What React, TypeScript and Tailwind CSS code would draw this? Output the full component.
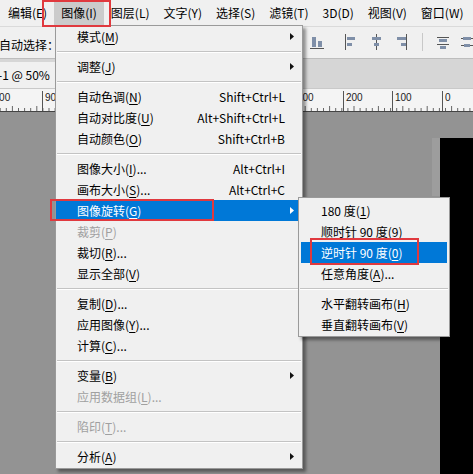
import type { ReactNode } from "react";

type Item =
  | { kind: "sep" }
  | {
      kind: "item";
      label: string;
      key: string;
      tail?: string;
      shortcut?: string;
      submenu?: boolean;
      disabled?: boolean;
      active?: boolean;
    };

const menuBar = ["编辑(E)", "图像(I)", "图层(L)", "文字(Y)", "选择(S)", "滤镜(T)", "3D(D)", "视图(V)", "窗口(W)"];

const imageMenu: Item[] = [
  { kind: "item", label: "模式", key: "M", submenu: true },
  { kind: "sep" },
  { kind: "item", label: "调整", key: "J", submenu: true },
  { kind: "sep" },
  { kind: "item", label: "自动色调", key: "N", shortcut: "Shift+Ctrl+L" },
  { kind: "item", label: "自动对比度", key: "U", shortcut: "Alt+Shift+Ctrl+L" },
  { kind: "item", label: "自动颜色", key: "O", shortcut: "Shift+Ctrl+B" },
  { kind: "sep" },
  { kind: "item", label: "图像大小", key: "I", tail: "...", shortcut: "Alt+Ctrl+I" },
  { kind: "item", label: "画布大小", key: "S", tail: "...", shortcut: "Alt+Ctrl+C" },
  { kind: "item", label: "图像旋转", key: "G", submenu: true, active: true },
  { kind: "item", label: "裁剪", key: "P", disabled: true },
  { kind: "item", label: "裁切", key: "R", tail: "..." },
  { kind: "item", label: "显示全部", key: "V" },
  { kind: "sep" },
  { kind: "item", label: "复制", key: "D", tail: "..." },
  { kind: "item", label: "应用图像", key: "Y", tail: "..." },
  { kind: "item", label: "计算", key: "C", tail: "..." },
  { kind: "sep" },
  { kind: "item", label: "变量", key: "B", submenu: true },
  { kind: "item", label: "应用数据组", key: "L", tail: "...", disabled: true },
  { kind: "sep" },
  { kind: "item", label: "陷印", key: "T", tail: "...", disabled: true },
  { kind: "sep" },
  { kind: "item", label: "分析", key: "A", submenu: true },
];

const rotateMenu: Item[] = [
  { kind: "item", label: "180 度", key: "1" },
  { kind: "item", label: "顺时针 90 度", key: "9" },
  { kind: "item", label: "逆时针 90 度", key: "0", active: true },
  { kind: "item", label: "任意角度", key: "A", tail: "..." },
  { kind: "sep" },
  { kind: "item", label: "水平翻转画布", key: "H" },
  { kind: "item", label: "垂直翻转画布", key: "V" },
];

const rulerLabels = [
  { x: -12, text: "1000" },
  { x: 45, text: "900" },
  { x: 297, text: "300" },
  { x: 346, text: "200" },
  { x: 395, text: "100" },
  { x: 445, text: "0" },
];

export default function App() {
  return (
    <div className="relative flex h-[474px] w-[473px] flex-col overflow-hidden bg-[#939393] font-['Noto_Sans_CJK_SC',sans-serif] text-[12px] text-black">
      <div className="flex h-[26px] shrink-0 items-center bg-[#f0f0f0] pl-px">
        {menuBar.map((label) => (
          <div
            key={label}
            className={`flex h-[24px] items-center px-[7px] ${label === "图像(I)" ? "bg-[#cbcbcb]" : ""}`}
          >
            {label}
          </div>
        ))}
      </div>

      <div className="flex h-[32px] shrink-0 items-center border-t border-[#dadada] bg-[#f0f0f0]">
        <span className="ml-[-1px] pt-[4px]">自动选择：</span>
        <div className="ml-auto flex items-center gap-[14px] pb-[2px] pr-[0px]">
          <AlignIcons />
        </div>
      </div>

      <div className="flex h-[30px] shrink-0 items-end border-t border-[#bdbdbd] bg-[#d6d6d6]">
        <div className="flex h-[26px] w-[200px] items-center bg-[#f0f0f0] pl-[0px]">
          <span className="ml-[-2px]">-1 @ 50%</span>
        </div>
      </div>

      <Ruler />

      <div className="flex flex-1 justify-end pt-[27px]">
        <div className="w-[8px] self-start bg-[#9d9d9d]" style={{ height: 58 }} />
        <div className="w-[33px] bg-black" />
      </div>

      <Menu className="left-[55px] top-[25px] w-[248px]" items={imageMenu} />
      <Menu className="left-[298px] top-[197px] w-[152px]" items={rotateMenu} compact />

      <div className="pointer-events-none absolute left-[42px] top-0 h-[27px] w-[69px] border-2 border-[#e0393e]" />
      <div className="pointer-events-none absolute left-[50px] top-[199px] h-[22px] w-[164px] border-2 border-[#e0393e]" />
      <div className="pointer-events-none absolute left-[310px] top-[238px] h-[27px] w-[109px] border-2 border-[#e0393e]" />
    </div>
  );
}

function Menu({ items, className, compact }: { items: Item[]; className: string; compact?: boolean }) {
  return (
    <div
      className={`absolute border border-[#9a9a9a] bg-[#f0f0f0] shadow-[3px_3px_3px_rgba(0,0,0,0.4)] ${
        compact ? "pb-px pt-[2px]" : "pb-px"
      } ${className}`}
    >
      {items.map((item, i) =>
        item.kind === "sep" ? (
          <div key={i} className="flex h-[9px] flex-col justify-center px-px">
            <div className="h-px bg-[#c3c3c3]" />
            <div className="h-px bg-white" />
          </div>
        ) : (
          <MenuRow key={i} item={item} compact={compact} />
        ),
      )}
    </div>
  );
}

function MenuRow({ item, compact }: { item: Extract<Item, { kind: "item" }>; compact?: boolean }) {
  const color = item.active ? "bg-[#0078d7] text-white" : item.disabled ? "text-[#a0a0a0]" : "";
  return (
    <div className={`flex h-[21px] items-center ${compact ? "mx-[2px] pl-[20px]" : "pl-[21px]"} ${color}`}>
      <span className="flex-1 whitespace-nowrap">
        {item.label}(<span className="underline underline-offset-2">{item.key}</span>){item.tail}
      </span>
      {item.shortcut ? <span className="whitespace-nowrap">{item.shortcut}</span> : null}
      {!compact ? (
        <span className="flex w-[17px] justify-start pl-[5px]">
          {item.submenu ? <Arrow light={item.active} /> : null}
        </span>
      ) : null}
    </div>
  );
}

function Arrow({ light }: { light?: boolean }) {
  return (
    <svg width="4" height="7" viewBox="0 0 4 7">
      <path d="M0 0L4 3.5L0 7Z" fill={light ? "#ffffff" : "#111111"} />
    </svg>
  );
}

function Ruler() {
  const minor: ReactNode[] = [];
  for (let x = -12; x < 473; x += 6.1) {
    const step = Math.round((x + 12) / 6.1);
    const h = step % 4 === 0 ? 5 : 3;
    minor.push(<line key={x} x1={x} x2={x} y1={22 - h} y2={22} stroke="#666" strokeWidth="1" />);
  }
  return (
    <div className="relative h-[23px] shrink-0 border-t border-[#c9c9c9] bg-[#f4f4f4]">
      <svg className="absolute inset-0" width="473" height="23">
        {minor}
        {rulerLabels.map((l) => (
          <line key={l.text} x1={l.x - 2.5} x2={l.x - 2.5} y1={2} y2={22} stroke="#555" strokeWidth="1" />
        ))}
        <line x1="0" x2="473" y1="22.5" y2="22.5" stroke="#444" strokeWidth="1" />
      </svg>
      {rulerLabels.map((l) => (
        <span
          key={l.text}
          className="absolute top-[3px] font-['Liberation_Sans',sans-serif] text-[10px] leading-[12px] text-[#222]"
          style={{ left: l.x }}
        >
          {l.text}
        </span>
      ))}
    </div>
  );
}

function AlignIcons() {
  return (
    <>
      <svg width="14" height="16" viewBox="0 0 14 16">
        <rect x="2" y="3" width="4" height="10" fill="#7f8fa8" />
        <rect x="8" y="7" width="4" height="6" fill="#7f8fa8" />
        <line x1="0" x2="14" y1="14.5" y2="14.5" stroke="#555" />
      </svg>
      <div className="ml-[6px] flex gap-[14px]">
        <svg width="12" height="16" viewBox="0 0 12 16">
          <line x1="1.5" x2="1.5" y1="0" y2="16" stroke="#555" />
          <rect x="3" y="3" width="8" height="3" fill="#7f8fa8" />
          <rect x="3" y="9" width="5" height="3" fill="#7f8fa8" />
        </svg>
        <svg width="12" height="16" viewBox="0 0 12 16">
          <line x1="6.5" x2="6.5" y1="0" y2="16" stroke="#555" />
          <rect x="2" y="3" width="9" height="3" fill="#7f8fa8" />
          <rect x="4" y="9" width="5" height="3" fill="#7f8fa8" />
        </svg>
        <svg width="12" height="16" viewBox="0 0 12 16">
          <line x1="10.5" x2="10.5" y1="0" y2="16" stroke="#555" />
          <rect x="1" y="3" width="9" height="3" fill="#7f8fa8" />
          <rect x="5" y="9" width="5" height="3" fill="#7f8fa8" />
        </svg>
      </div>
      <div className="h-[18px] w-px bg-[#c8c8c8]" />
      <div className="flex gap-[12px]">
        <svg width="12" height="16" viewBox="0 0 12 16">
          <line x1="0" x2="12" y1="3.5" y2="3.5" stroke="#555" />
          <rect x="2" y="5" width="8" height="3" fill="#7f8fa8" />
          <line x1="0" x2="12" y1="10.5" y2="10.5" stroke="#555" />
          <rect x="3" y="12" width="6" height="3" fill="#7f8fa8" />
        </svg>
        <svg width="12" height="16" viewBox="0 0 12 16">
          <line x1="0" x2="12" y1="4.5" y2="4.5" stroke="#555" />
          <rect x="2" y="3" width="8" height="3" fill="#7f8fa8" />
          <line x1="0" x2="12" y1="11.5" y2="11.5" stroke="#555" />
          <rect x="3" y="10" width="6" height="3" fill="#7f8fa8" />
        </svg>
      </div>
    </>
  );
}
